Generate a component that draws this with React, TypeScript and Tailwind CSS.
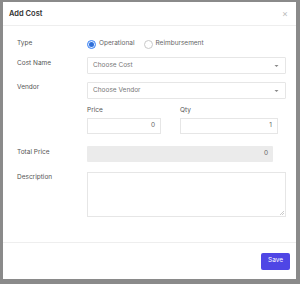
import React from 'react';

function Caret() {
  return (
    <svg width="5" height="4" viewBox="0 0 5 4" className="shrink-0">
      <path d="M0.5 1 L2.5 3 L4.5 1 Z" fill="#888" />
    </svg>
  );
}

function Radio({ checked, label }: { checked?: boolean; label: string }) {
  return (
    <div className="flex items-center gap-[3px]">
      <div
        className={`w-[9px] h-[9px] rounded-full border flex items-center justify-center ${checked ? 'border-[#3b82f6] bg-[#dbeafe]' : 'border-[#c9c9c9] bg-white'}`}
      >
        {checked && <div className="w-[5px] h-[5px] rounded-full bg-[#2f6fd8]" />}
      </div>
      <span className="text-[#666]">{label}</span>
    </div>
  );
}

export default function App() {
  return (
    <div
      className="w-[300px] h-[284px] bg-[#8a8a8a] pl-[3px] pt-[2px] pr-[4px] pb-[5px]"
      style={{ fontFamily: 'Inter, "Noto Sans", sans-serif' }}
    >
      <div className="w-full h-full bg-white flex flex-col text-[6.5px] text-[#555]">
        <div className="h-[24px] flex items-center justify-between pl-[6px] pr-[8px] border-b border-[#eeeeee]">
          <span className="text-[7.5px] font-semibold text-[#333]">Add Cost</span>
          <span className="text-[9px] text-[#bbb] leading-none">×</span>
        </div>

        <div className="flex-1 pl-[14px] pr-[10px] pt-[13px]">
          <div className="flex items-center h-[10px]">
            <div className="w-[70px]">Type</div>
            <div className="flex items-center gap-[9px]">
              <Radio checked label="Operational" />
              <Radio label="Reimbursement" />
            </div>
          </div>

          <div className="flex mt-[8px]">
            <div className="w-[70px] pt-[2px]">Cost Name</div>
            <div className="flex-1 h-[17px] border border-[#e6e6e6] rounded-[1px] flex items-center justify-between pl-[5px] pr-[6px]">
              <span className="text-[#777]">Choose Cost</span>
              <Caret />
            </div>
          </div>

          <div className="flex mt-[8px]">
            <div className="w-[70px] pt-[1px]">Vendor</div>
            <div className="flex-1 h-[17px] border border-[#e6e6e6] rounded-[1px] flex items-center justify-between pl-[5px] pr-[6px]">
              <span className="text-[#777]">Choose Vendor</span>
              <Caret />
            </div>
          </div>

          <div className="flex mt-[7px]">
            <div className="w-[70px]" />
            <div className="flex gap-[19px]">
              <div className="w-[74px]">
                <div className="h-[9px]">Price</div>
                <div className="h-[16px] mt-[3px] border border-[#e6e6e6] flex items-center justify-end pr-[5px] text-[#666]">0</div>
              </div>
              <div className="w-[98px]">
                <div className="h-[9px]">Qty</div>
                <div className="h-[16px] mt-[3px] border border-[#e6e6e6] flex items-center justify-end pr-[5px] text-[#666]">1</div>
              </div>
            </div>
          </div>

          <div className="flex mt-[12px]">
            <div className="w-[70px] pt-[2px]">Total Price</div>
            <div className="w-[186px] h-[16px] bg-[#ebebeb] rounded-[1px] flex items-center justify-end pr-[5px] text-[#666]">0</div>
          </div>

          <div className="flex mt-[10px]">
            <div className="w-[70px] pt-[1px]">Description</div>
            <div className="flex-1 h-[45px] border border-[#e6e6e6] relative">
              <svg width="4" height="4" viewBox="0 0 4 4" className="absolute right-[1px] bottom-[1px]">
                <path d="M4 0 L0 4 M4 2 L2 4" stroke="#aaa" strokeWidth="0.6" />
              </svg>
            </div>
          </div>
        </div>

        <div className="h-[37px] border-t border-[#eeeeee] flex items-center justify-end pr-[6px]">
          <div className="h-[17px] w-[29px] bg-[#4f46e5] rounded-[2px] text-white flex items-center justify-center">
            Save
          </div>
        </div>
      </div>
    </div>
  );
}
